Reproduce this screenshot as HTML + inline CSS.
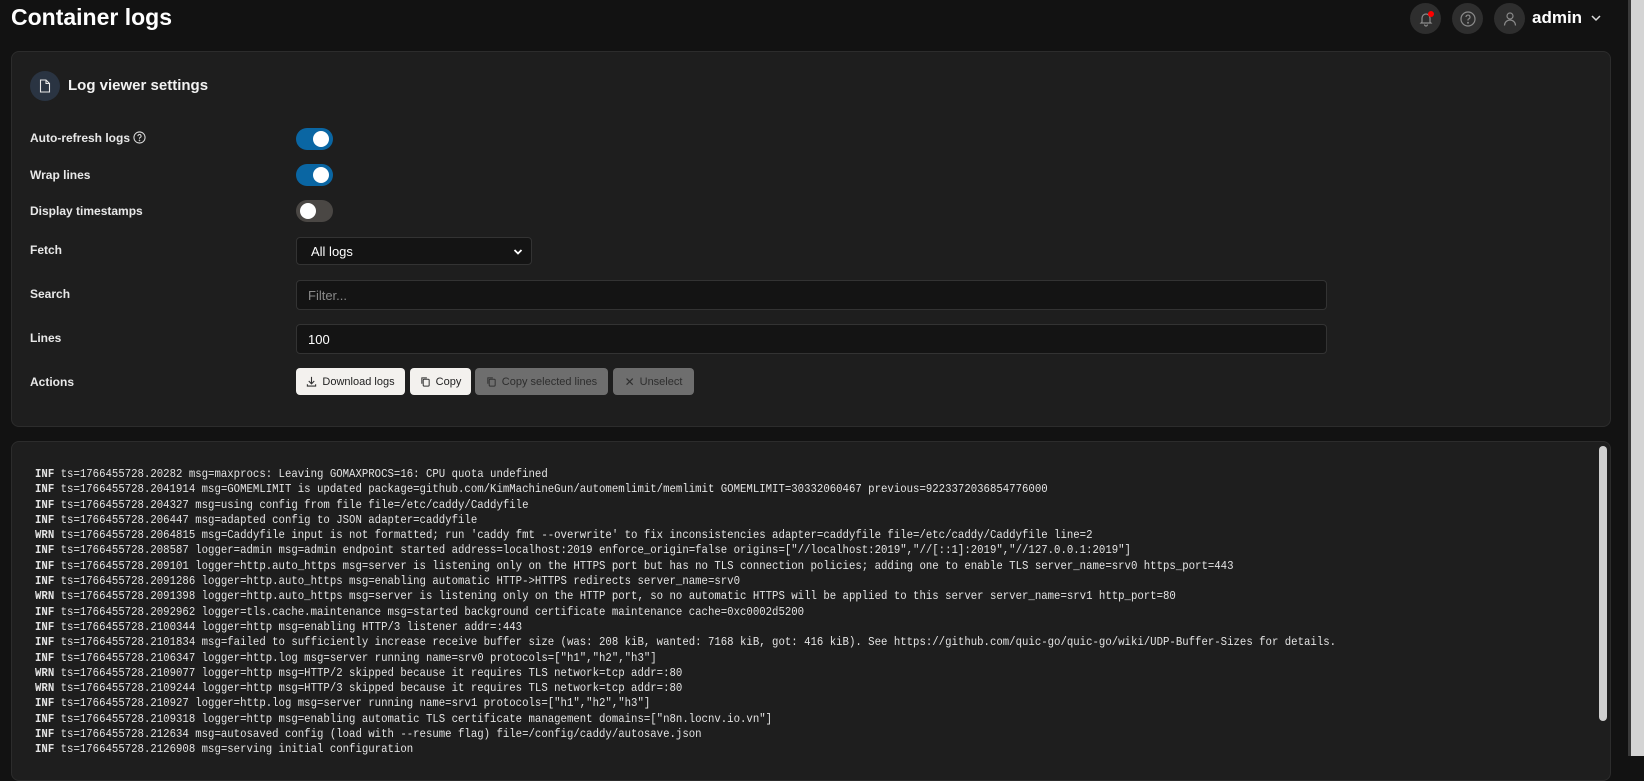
<!DOCTYPE html>
<html><head><meta charset="utf-8"><style>
*{box-sizing:border-box;margin:0;padding:0}
html,body{width:1644px;height:756px;overflow:hidden;background:#121212;font-family:"Liberation Sans",sans-serif;color:#f0f0f0}
.abs{position:absolute}
.title{left:11px;top:4px;font-size:23px;font-weight:700;color:#fff}
.circ{width:31px;height:31px;border-radius:50%;background:#2e2e2e;top:3px;display:flex;align-items:center;justify-content:center}
.card{left:11px;width:1600px;background:#1e1e1e;border:1px solid #2c2c2c;border-radius:8px}
.lbl{left:30px;font-size:12px;font-weight:700;color:#e8e8e8;transform:translateY(-50%)}
.tog{left:296px;width:37px;height:22px;border-radius:11px;background:#0a66a3;transform:translateY(-50%)}
.tog::after{content:"";position:absolute;top:3px;right:4px;width:16px;height:16px;border-radius:50%;background:#fff}
.tog.off{background:#4a4744}.tog.off::after{right:auto;left:4px}
.inp{left:296px;background:#141414;border:1px solid #333;border-radius:4px;font-size:13px;padding-left:11px;display:flex;align-items:center}
.btn{top:368px;height:27px;border-radius:4px;font-size:11px;display:flex;align-items:center;justify-content:center;gap:5px}
.w{background:#f3f1ee;color:#222}.g{background:#6e6e6e;color:#2e2e2e}
.log{left:35px;top:467px;font-family:"Liberation Mono",monospace;font-size:12px;line-height:15.3px;color:#e4e4e4;white-space:pre;transform:scaleX(0.89);transform-origin:0 0}
.log b{font-weight:700}
</style></head><body>
<div class="abs title">Container logs</div>
<div class="abs circ" style="left:1410px"><svg width="16" height="16" viewBox="0 0 16 16" fill="none" stroke="#8a8a8a" stroke-width="1.2"><path d="M4 11V7a4 4 0 0 1 8 0v4l1 1H3z"/><path d="M6.5 13.5a1.5 1.5 0 0 0 3 0"/></svg><div class="abs" style="width:6px;height:6px;border-radius:50%;background:#f00;top:8px;left:18px"></div></div>
<div class="abs circ" style="left:1452px"><svg width="18" height="18" viewBox="0 0 18 18" fill="none" stroke="#8a8a8a" stroke-width="1.2"><circle cx="9" cy="9" r="7"/><path d="M7 7a2 2 0 1 1 2.5 2c-.4.2-.5.5-.5 1v.5"/><circle cx="9" cy="12.8" r=".4"/></svg></div>
<div class="abs circ" style="left:1494px"><svg width="16" height="16" viewBox="0 0 16 16" fill="none" stroke="#8a8a8a" stroke-width="1.2"><circle cx="8" cy="5" r="3"/><path d="M2.5 14.5a5.5 5.5 0 0 1 11 0"/></svg></div>
<div class="abs" style="left:1532px;top:8px;font-size:17px;font-weight:700;color:#fff">admin</div>
<svg class="abs" style="left:1590px;top:13px" width="12" height="10" viewBox="0 0 12 10" fill="none" stroke="#ddd" stroke-width="1.5"><path d="M2 3l4 4 4-4"/></svg>
<div class="abs" style="left:1628px;top:0;width:16px;height:756px;background:#d4d4d4;border-left:3px solid #3a3a3a"></div>

<div class="abs card" style="top:51px;height:376px"></div>
<div class="abs" style="left:30px;top:71px;width:30px;height:30px;border-radius:50%;background:#2a3442;display:flex;align-items:center;justify-content:center"><svg width="12" height="14" viewBox="0 0 12 14" fill="none" stroke="#e8e8e8" stroke-width="1.1"><path d="M1.5 1h5.5l3.5 3.5V13h-9z"/><path d="M7 1v3.5h3.5"/></svg></div>
<div class="abs" style="left:68px;top:77px;font-size:15px;font-weight:700;color:#f2f2f2">Log viewer settings</div>

<div class="abs lbl" style="top:138px">Auto-refresh logs <svg width="13" height="13" viewBox="0 0 14 14" fill="none" stroke="#ddd" stroke-width="1.1" style="vertical-align:-2px"><circle cx="7" cy="7" r="6"/><path d="M5.3 5.5a1.7 1.7 0 1 1 2.2 1.6c-.4.2-.5.4-.5.8v.4"/><circle cx="7" cy="10.2" r=".3"/></svg></div>
<div class="abs tog" style="top:139px"></div>
<div class="abs lbl" style="top:175px">Wrap lines</div>
<div class="abs tog" style="top:175px"></div>
<div class="abs lbl" style="top:211px">Display timestamps</div>
<div class="abs tog off" style="top:211px"></div>
<div class="abs lbl" style="top:250px">Fetch</div>
<div class="abs inp" style="top:237px;width:236px;height:28px;color:#fff;font-size:13px;padding-left:14px">All logs<svg class="abs" style="right:8px;top:10px" width="10" height="8" viewBox="0 0 10 8" fill="none" stroke="#fff" stroke-width="1.8"><path d="M1.5 2l3.5 3.5 3.5-3.5"/></svg></div>
<div class="abs lbl" style="top:294px">Search</div>
<div class="abs inp" style="top:280px;width:1031px;height:30px;color:#8a8a8a">Filter...</div>
<div class="abs lbl" style="top:338px">Lines</div>
<div class="abs inp" style="top:324px;width:1031px;height:30px;color:#fff">100</div>
<div class="abs lbl" style="top:382px">Actions</div>
<div class="abs btn w" style="left:296px;width:109px"><svg width="11" height="11" viewBox="0 0 12 12" fill="none" stroke="#333" stroke-width="1.2"><path d="M6 1v7M3 5.5 6 8.5 9 5.5M1.5 9v2h9V9"/></svg>Download logs</div>
<div class="abs btn w" style="left:410px;width:61px"><svg width="11" height="11" viewBox="0 0 12 12" fill="none" stroke="#333" stroke-width="1.1"><rect x="3.5" y="3.5" width="6.5" height="7.5" rx="1"/><path d="M2 8.5V2h5.5"/></svg>Copy</div>
<div class="abs btn g" style="left:475px;width:133px"><svg width="11" height="11" viewBox="0 0 12 12" fill="none" stroke="#333" stroke-width="1.1"><rect x="3.5" y="3.5" width="6.5" height="7.5" rx="1"/><path d="M2 8.5V2h5.5"/></svg>Copy selected lines</div>
<div class="abs btn g" style="left:613px;width:81px"><span style="font-size:12px">✕</span>Unselect</div>

<div class="abs card" style="top:441px;height:340px"></div>
<div class="abs" style="left:1599px;top:446px;width:8px;height:275px;border-radius:4px;background:#cfcfcf"></div>
<div class="abs log"><b>INF</b> ts=1766455728.20282 msg=maxprocs: Leaving GOMAXPROCS=16: CPU quota undefined
<b>INF</b> ts=1766455728.2041914 msg=GOMEMLIMIT is updated package=github.com/KimMachineGun/automemlimit/memlimit GOMEMLIMIT=30332060467 previous=9223372036854776000
<b>INF</b> ts=1766455728.204327 msg=using config from file file=/etc/caddy/Caddyfile
<b>INF</b> ts=1766455728.206447 msg=adapted config to JSON adapter=caddyfile
<b>WRN</b> ts=1766455728.2064815 msg=Caddyfile input is not formatted; run 'caddy fmt --overwrite' to fix inconsistencies adapter=caddyfile file=/etc/caddy/Caddyfile line=2
<b>INF</b> ts=1766455728.208587 logger=admin msg=admin endpoint started address=localhost:2019 enforce_origin=false origins=["//localhost:2019","//[::1]:2019","//127.0.0.1:2019"]
<b>INF</b> ts=1766455728.209101 logger=http.auto_https msg=server is listening only on the HTTPS port but has no TLS connection policies; adding one to enable TLS server_name=srv0 https_port=443
<b>INF</b> ts=1766455728.2091286 logger=http.auto_https msg=enabling automatic HTTP->HTTPS redirects server_name=srv0
<b>WRN</b> ts=1766455728.2091398 logger=http.auto_https msg=server is listening only on the HTTP port, so no automatic HTTPS will be applied to this server server_name=srv1 http_port=80
<b>INF</b> ts=1766455728.2092962 logger=tls.cache.maintenance msg=started background certificate maintenance cache=0xc0002d5200
<b>INF</b> ts=1766455728.2100344 logger=http msg=enabling HTTP/3 listener addr=:443
<b>INF</b> ts=1766455728.2101834 msg=failed to sufficiently increase receive buffer size (was: 208 kiB, wanted: 7168 kiB, got: 416 kiB). See https://github.com/quic-go/quic-go/wiki/UDP-Buffer-Sizes for details.
<b>INF</b> ts=1766455728.2106347 logger=http.log msg=server running name=srv0 protocols=["h1","h2","h3"]
<b>WRN</b> ts=1766455728.2109077 logger=http msg=HTTP/2 skipped because it requires TLS network=tcp addr=:80
<b>WRN</b> ts=1766455728.2109244 logger=http msg=HTTP/3 skipped because it requires TLS network=tcp addr=:80
<b>INF</b> ts=1766455728.210927 logger=http.log msg=server running name=srv1 protocols=["h1","h2","h3"]
<b>INF</b> ts=1766455728.2109318 logger=http msg=enabling automatic TLS certificate management domains=["n8n.locnv.io.vn"]
<b>INF</b> ts=1766455728.212634 msg=autosaved config (load with --resume flag) file=/config/caddy/autosave.json
<b>INF</b> ts=1766455728.2126908 msg=serving initial configuration</div>
</body></html>
